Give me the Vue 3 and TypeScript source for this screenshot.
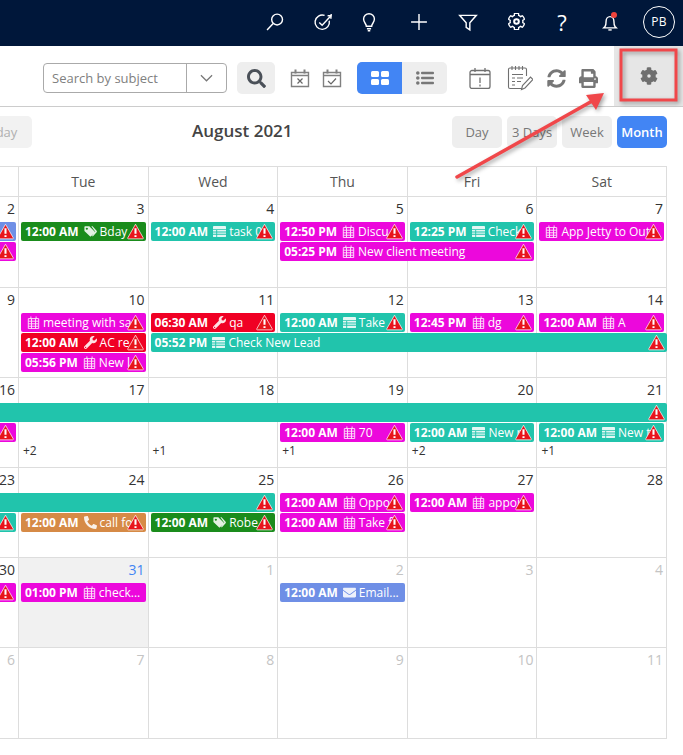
<template>
  <div class="page">
    <header class="topbar">
      <svg class="top-icon" viewBox="0 0 24 24"><circle cx="14.5" cy="9" r="6.5" /><path d="M9.8 13.8 2.5 21.5" /></svg>
      <svg class="top-icon" viewBox="0 0 24 24"><path d="M19.5 10.5a8.6 8.6 0 1 1-5.6-6.4" /><path d="m7.5 12.5 3.5 3.5 10-11" /><path d="M17.5 4.5h4.3v-2M21.5 4.5v3.5" /></svg>
      <svg class="top-icon bulb" viewBox="0 0 24 24"><path d="M8.8 17c0-3-3.3-4.300-3.300-8.500a6.500 6.500 0 0 1 13 0c0 4.200-3.300 5.500-3.300 8.500z" /><path d="M9.500 20h5M10.500 22.500h3" /></svg>
      <svg class="top-icon plus" viewBox="0 0 24 24"><path d="M12 2.500v19M2.500 12h19" /></svg>
      <svg class="top-icon funnel" viewBox="0 0 24 24"><path d="M2 4h20l-7.800 9v8.500l-4.400-3V13z" /></svg>
      <svg class="top-icon cog" viewBox="0 0 512 512"><path class="cog-line" :d="cogPath" /><circle class="cog-line" cx="256" cy="256" r="60" /></svg>
      <span class="help">?</span>
      <span class="bell">
        <svg class="top-icon" viewBox="0 0 24 24"><path d="M6 17.500c1.300-2 1.300-4 1.300-6.500 0-3 2-5.500 4.700-5.500s4.700 2.500 4.700 5.500c0 2.500 0 4.500 1.300 6.500l1.500 1.500H4.500z" /><path d="M10 21.500h4" /></svg>
        <i class="dot"></i>
      </span>
      <span class="avatar">PB</span>
    </header>

    <div class="toolbar">
      <div class="tools">
        <div class="search">
          <span class="placeholder">Search by subject</span>
          <span class="chev"><svg viewBox="0 0 14 8"><path d="m1 1 6 6 6-6" /></svg></span>
        </div>
        <button class="search-btn">
          <svg viewBox="0 0 512 512"><path :d="paths.search" /></svg>
        </button>
        <svg class="cal-ic first" viewBox="0 0 20 20">
          <path d="M1.500 4.500h17v14h-17zM1.500 7.500h17" /><path class="tick" d="M5.500 1.500v4M14.500 1.500v4" /><path class="mark" d="m7.500 10.500 5 5M12.500 10.500l-5 5" />
        </svg>
        <svg class="cal-ic" viewBox="0 0 20 20">
          <path d="M1.500 4.500h17v14h-17zM1.500 7.500h17" /><path class="tick" d="M5.500 1.500v4M14.500 1.500v4" /><path class="mark" d="m6 13 3 3 5-5.500" />
        </svg>
        <div class="toggle">
          <span class="toggle-on">
            <svg viewBox="0 0 18 14"><rect x="0" y="0" width="8" height="6" rx="1.500" /><rect x="10" y="0" width="8" height="6" rx="1.500" /><rect x="0" y="8" width="8" height="6" rx="1.500" /><rect x="10" y="8" width="8" height="6" rx="1.500" /></svg>
          </span>
          <span class="toggle-off">
            <svg viewBox="0 0 18 14"><circle cx="1.800" cy="2" r="1.800" /><circle cx="1.800" cy="7" r="1.800" /><circle cx="1.800" cy="12" r="1.800" /><rect x="5" y=".8" width="13" height="2.400" rx="1" /><rect x="5" y="5.800" width="13" height="2.400" rx="1" /><rect x="5" y="10.800" width="13" height="2.400" rx="1" /></svg>
          </span>
        </div>
        <svg class="tool-ic alarm" viewBox="0 0 22 22">
          <path d="M3 3.500h16a2 2 0 0 1 2 2v14a2 2 0 0 1-2 2H3a2 2 0 0 1-2-2v-14a2 2 0 0 1 2-2zM1 7.500h20M6 1v4M16 1v4" /><path d="M11 10.500v5.500M11 17.500v2" />
        </svg>
        <svg class="tool-ic notes" viewBox="0 0 26 26">
          <path d="M15 23.500H3a1.500 1.500 0 0 1-1.500-1.500V4.500A1.500 1.500 0 0 1 3 3h15a1.500 1.500 0 0 1 1.500 1.500V11" /><path d="M5 1v4M8.500 1v4M12 1v4M15.500 1v4M5 9.500h11M5 13h3M10 13h6M5 16.500h3M10 16.500h4M5 20h3" /><path d="m14.500 24.500 1-4 8-8.500 2.500 2.500-8 8.500z" />
        </svg>
        <svg class="fa-ic sync" viewBox="0 0 512 512"><path :d="paths.sync" /></svg>
        <svg class="fa-ic print" viewBox="0 0 512 512"><path :d="paths.print" /></svg>
      </div>
      <div class="gear-box">
        <svg viewBox="0 0 512 512"><path :d="cogPath" /><circle cx="256" cy="256" r="90" /><circle class="gear-hole" cx="256" cy="256" r="50" /></svg>
      </div>
    </div>

    <div class="calbar">
      <button class="vbtn today-btn">Today</button>
      <h2 class="title">August 2021</h2>
      <div class="views">
        <button v-for="v in views" :key="v" class="vbtn" :class="{ active: v === 'Month' }">{{ v }}</button>
      </div>
    </div>

    <div class="calendar">
      <div class="head">
        <div v-for="d in days" :key="d" class="head-cell">{{ d }}</div>
      </div>
      <div v-for="(week, w) in weeks" :key="w" class="week">
        <div
          v-for="(cell, c) in week.dates"
          :key="c"
          class="cell"
          :class="{ faded: cell.faded, today: cell.today }"
          :style="{ gridColumn: c + 1 }"
        >{{ cell.n }}</div>
        <div
          v-for="(ev, e) in week.events"
          :key="e"
          class="event"
          :class="{ 'open-l': ev.openL, 'open-r': ev.openR }"
          :style="{ gridColumn: `${ev.col} / span ${ev.span || 1}`, gridRow: ev.row + 1, background: colors[ev.color] }"
        >
          <div class="event-text">
            <b v-if="ev.time">{{ ev.time }}</b>
            <svg
              v-if="ev.icon"
              class="ev-icon"
              :class="{ lined: icons[ev.icon].lined }"
              :viewBox="icons[ev.icon].box"
            ><path :d="icons[ev.icon].d" /></svg>
            <span v-if="ev.title">{{ ev.title }}</span>
          </div>
          <svg v-if="ev.warn !== false" class="warn" viewBox="0 0 18 17">
            <path class="warn-bg" d="M9 .8 17.200 15.200a.7.7 0 0 1-.6 1.100H1.400a.7.7 0 0 1-.6-1.100z" />
            <path class="warn-ex" d="M9 5v6M9 12.600v1.600" />
          </svg>
        </div>
        <div
          v-for="m in week.more"
          :key="m.col"
          class="more"
          :style="{ gridColumn: m.col }"
        >{{ m.text }}</div>
      </div>
    </div>

    <svg class="note-layer" viewBox="0 0 683 755">
      <rect x="621" y="50" width="55" height="50" />
      <path d="M457 177 594 100" />
      <polygon points="604,93 586,95 596,110" />
    </svg>
  </div>
</template>

<script setup lang="ts">
type Color = 'magenta' | 'teal' | 'green' | 'red' | 'orange' | 'blue'
type IconName = 'tag' | 'list' | 'cal' | 'wrench' | 'phone' | 'mail'

interface CalEvent {
  col: number
  row: number
  color: Color
  span?: number
  time?: string
  icon?: IconName
  title?: string
  warn?: boolean
  openL?: boolean
  openR?: boolean
}

interface Week {
  dates: { n: number; faded?: boolean; today?: boolean }[]
  events: CalEvent[]
  more?: { col: number; text: string }[]
}

const views = ['Day', '3 Days', 'Week', 'Month']
const days = ['Mon', 'Tue', 'Wed', 'Thu', 'Fri', 'Sat']

const colors: Record<Color, string> = {
  magenta: '#ec08dc',
  teal: '#21c4ac',
  green: '#1a8c1c',
  red: '#f00024',
  orange: '#d68a46',
  blue: '#6f8fe6'
}

const cogPath =
  'M487.4 315.7l-42.6-24.6c4.3-23.2 4.3-47 0-70.2l42.6-24.6c4.9-2.8 7.1-8.6 5.5-14-11.1-35.6-30-67.8-54.7-94.6-3.8-4.1-10-5.1-14.8-2.3L380.8 110c-17.9-15.4-38.5-27.3-60.8-35.1V25.800c0-5.6-3.9-10.5-9.4-11.7-36.7-8.2-74.3-7.8-109.2 0-5.5 1.2-9.4 6.1-9.4 11.7V75c-22.2 7.9-42.8 19.8-60.8 35.1L88.7 85.500c-4.9-2.8-11-1.9-14.8 2.3-24.7 26.7-43.6 58.9-54.7 94.6-1.7 5.4.6 11.2 5.5 14L67.3 221c-4.3 23.2-4.3 47 0 70.2l-42.6 24.6c-4.9 2.8-7.1 8.6-5.5 14 11.1 35.6 30 67.8 54.7 94.6 3.8 4.1 10 5.1 14.8 2.3l42.6-24.6c17.9 15.4 38.5 27.3 60.8 35.1v49.2c0 5.6 3.9 10.5 9.4 11.7 36.7 8.2 74.3 7.8 109.2 0 5.5-1.2 9.4-6.1 9.4-11.7v-49.2c22.2-7.9 42.8-19.8 60.8-35.1l42.6 24.6c4.9 2.8 11 1.9 14.8-2.3 24.7-26.7 43.6-58.9 54.7-94.6 1.5-5.5-.7-11.3-5.6-14.1zM256 336c-44.1 0-80-35.9-80-80s35.9-80 80-80 80 35.9 80 80-35.9 80-80 80z'

const paths = {
  search:
    'M505 442.7L405.3 343c-4.5-4.5-10.6-7-17-7H372c27.6-35.3 44-79.7 44-128C416 93.1 322.9 0 208 0S0 93.1 0 208s93.1 208 208 208c48.3 0 92.7-16.4 128-44v16.3c0 6.4 2.5 12.5 7 17l99.7 99.7c9.4 9.4 24.6 9.4 33.9 0l28.3-28.3c9.4-9.4 9.4-24.6.1-34zM208 336c-70.7 0-128-57.2-128-128 0-70.7 57.2-128 128-128 70.7 0 128 57.2 128 128 0 70.7-57.2 128-128 128z',
  sync:
    'M370.72 133.28C339.458 104.008 298.888 87.962 255.848 88c-77.458.068-144.328 53.178-162.791 126.85-1.344 5.363-6.122 9.15-11.651 9.15H24.103c-7.498 0-13.194-6.807-11.807-14.176C33.933 94.924 134.813 8 256 8c66.448 0 126.791 26.136 171.315 68.685L463.03 40.97C478.149 25.851 504 36.559 504 57.941V192c0 13.255-10.745 24-24 24H345.941c-21.382 0-32.09-25.851-16.971-40.971l41.75-41.749zM32 296h134.059c21.382 0 32.09 25.851 16.971 40.971l-41.75 41.75c31.262 29.273 71.835 45.319 114.876 45.28 77.418-.07 144.315-53.144 162.787-126.849 1.344-5.363 6.122-9.15 11.651-9.15h57.304c7.498 0 13.194 6.807 11.807 14.176C478.067 417.076 377.187 504 256 504c-66.448 0-126.791-26.136-171.315-68.685L48.97 471.03C33.851 486.149 8 475.441 8 454.059V320c0-13.255 10.745-24 24-24z',
  print:
    'M448 192V77.25c0-8.49-3.37-16.62-9.37-22.63L393.37 9.370c-6-6-14.14-9.37-22.63-9.37H96C78.33 0 64 14.33 64 32v160c-35.35 0-64 28.65-64 64v112c0 8.84 7.16 16 16 16h48v96c0 17.67 14.33 32 32 32h320c17.67 0 32-14.33 32-32v-96h48c8.84 0 16-7.16 16-16V256c0-35.35-28.65-64-64-64zm-64 256H128v-96h256v96zm0-224H128V64h192v48c0 8.84 7.16 16 16 16h48v96zm48 72c-13.25 0-24-10.75-24-24 0-13.26 10.75-24 24-24s24 10.74 24 24c0 13.25-10.75 24-24 24z'
}

const icons: Record<IconName, { box: string; d: string; lined?: boolean }> = {
  tag: {
    box: '0 0 16 14',
    d: 'M.5 1.500A1 1 0 0 1 1.500.5h5l6.500 6.500a1 1 0 0 1 0 1.400l-4.300 4.300a1 1 0 0 1-1.400 0L.5 6.500zM3.500 2.300a1.200 1.200 0 1 0 .01 0zM9 .5h1.500l5 5.700a1.200 1.200 0 0 1 0 1.600l-4.700 5.200-.9-.9 4-4.800z'
  },
  list: {
    box: '0 0 14 12',
    d: 'M1 0h12a1 1 0 0 1 1 1v2.500H0V1a1 1 0 0 1 1-1zM0 4.500h3.500V6H0zM4.500 4.500H14V6H4.500zM0 7h3.500v1.500H0zM4.500 7H14v1.500H4.500zM0 9.500h3.500V12H1a1 1 0 0 1-1-1zM4.500 9.500H14V11a1 1 0 0 1-1 1H4.500z'
  },
  cal: {
    box: '0 0 14 15',
    lined: true,
    d: 'M1 3h12v11.500H1zM1 6h12M1 9h12M1 11.800h12M4.700 3v11.500M9.300 3v11.500M4 .5v3M10 .5v3'
  },
  wrench: {
    box: '0 0 512 512',
    d: 'M507.73 109.1c-2.24-9.03-13.54-12.09-20.12-5.51l-74.36 74.36-67.88-11.31-11.31-67.88 74.36-74.36c6.62-6.62 3.43-17.9-5.66-20.16-47.38-11.74-99.55.91-136.58 37.93-39.64 39.64-50.55 97.1-34.05 147.2L18.74 402.76c-24.99 24.99-24.99 65.51 0 90.5 24.99 24.99 65.51 24.99 90.5 0l213.21-213.21c50.12 16.71 107.47 5.68 147.37-34.22 37.07-37.07 49.7-89.32 37.91-136.73zM64 472c-13.25 0-24-10.75-24-24 0-13.26 10.75-24 24-24s24 10.74 24 24c0 13.25-10.75 24-24 24z'
  },
  phone: {
    box: '0 0 512 512',
    d: 'M18.600 24.600l104-24c11.300-2.600 22.900 3.300 27.500 13.900l48 112c4.200 9.800 1.400 21.300-6.900 28l-60.600 49.600c36 76.700 98.900 140.500 177.200 177.200l49.600-60.600c6.800-8.300 18.200-11.100 28-6.900l112 48c10.700 4.700 16.600 16.300 14 27.600l-24 104c-2.500 10.800-12.100 18.600-23.400 18.600C208 512 0 304.500 0 48c0-11.200 7.700-20.900 18.600-23.400z'
  },
  mail: {
    box: '0 0 512 512',
    d: 'M502.3 190.8c3.9-3.1 9.7-.2 9.7 4.7V400c0 26.5-21.5 48-48 48H48c-26.5 0-48-21.5-48-48V195.600c0-5 5.700-7.800 9.700-4.700 22.400 17.400 52.100 39.500 154.100 113.600 21.100 15.400 56.700 47.800 92.200 47.600 35.700.3 72-32.800 92.300-47.600 102-74.100 131.600-96.300 154-113.700zM256 320c23.200.4 56.600-29.200 73.400-41.400 132.700-96.300 142.800-104.700 173.400-128.700 5.800-4.500 9.200-11.500 9.200-18.900v-19c0-26.500-21.500-48-48-48H48C21.500 64 0 85.500 0 112v19c0 7.400 3.400 14.300 9.200 18.900 30.600 23.900 40.700 32.400 173.400 128.700 16.800 12.200 50.200 41.800 73.400 41.400z'
  }
}

const nums = (list: number[], faded: number[] = []) =>
  list.map((n, i) => ({ n, faded: faded.includes(i) }))

const weeks: Week[] = [
  {
    dates: nums([2, 3, 4, 5, 6, 7]),
    events: [
      { col: 1, row: 1, color: 'blue' },
      { col: 1, row: 2, color: 'magenta' },
      { col: 2, row: 1, color: 'green', time: '12:00 AM', icon: 'tag', title: 'Bday' },
      { col: 3, row: 1, color: 'teal', time: '12:00 AM', icon: 'list', title: 'task 0' },
      { col: 4, row: 1, color: 'magenta', time: '12:50 PM', icon: 'cal', title: 'Discu' },
      { col: 4, row: 2, span: 2, color: 'magenta', time: '05:25 PM', icon: 'cal', title: 'New client meeting' },
      { col: 5, row: 1, color: 'teal', time: '12:25 PM', icon: 'list', title: 'Check' },
      { col: 6, row: 1, color: 'magenta', icon: 'cal', title: 'App Jetty to Out' }
    ]
  },
  {
    dates: nums([9, 10, 11, 12, 13, 14]),
    events: [
      { col: 2, row: 1, color: 'magenta', icon: 'cal', title: 'meeting with sa' },
      { col: 2, row: 2, color: 'red', time: '12:00 AM', icon: 'wrench', title: 'AC re' },
      { col: 2, row: 3, color: 'magenta', time: '05:56 PM', icon: 'cal', title: 'New l' },
      { col: 3, row: 1, color: 'red', time: '06:30 AM', icon: 'wrench', title: 'qa' },
      { col: 3, row: 2, span: 4, color: 'teal', time: '05:52 PM', icon: 'list', title: 'Check New Lead', openR: true },
      { col: 4, row: 1, color: 'teal', time: '12:00 AM', icon: 'list', title: 'Take' },
      { col: 5, row: 1, color: 'magenta', time: '12:45 PM', icon: 'cal', title: 'dg' },
      { col: 6, row: 1, color: 'magenta', time: '12:00 AM', icon: 'cal', title: 'A' }
    ]
  },
  {
    dates: nums([16, 17, 18, 19, 20, 21]),
    events: [
      { col: 1, row: 1, span: 6, color: 'teal', openL: true, openR: true },
      { col: 1, row: 2, color: 'magenta' },
      { col: 4, row: 2, color: 'magenta', time: '12:00 AM', icon: 'cal', title: '70' },
      { col: 5, row: 2, color: 'teal', time: '12:00 AM', icon: 'list', title: 'New r' },
      { col: 6, row: 2, color: 'teal', time: '12:00 AM', icon: 'list', title: 'New t' }
    ],
    more: [
      { col: 2, text: '+2' },
      { col: 3, text: '+1' },
      { col: 4, text: '+1' },
      { col: 5, text: '+2' },
      { col: 6, text: '+1' }
    ]
  },
  {
    dates: nums([23, 24, 25, 26, 27, 28]),
    events: [
      { col: 1, row: 1, span: 3, color: 'teal', openL: true },
      { col: 1, row: 2, color: 'teal' },
      { col: 2, row: 2, color: 'orange', time: '12:00 AM', icon: 'phone', title: 'call fo' },
      { col: 3, row: 2, color: 'green', time: '12:00 AM', icon: 'tag', title: 'Robe' },
      { col: 4, row: 1, color: 'magenta', time: '12:00 AM', icon: 'cal', title: 'Oppo' },
      { col: 4, row: 2, color: 'magenta', time: '12:00 AM', icon: 'cal', title: 'Take f' },
      { col: 5, row: 1, color: 'magenta', time: '12:00 AM', icon: 'cal', title: 'appoi' }
    ]
  },
  {
    dates: [
      { n: 30 },
      { n: 31, today: true },
      { n: 1, faded: true },
      { n: 2, faded: true },
      { n: 3, faded: true },
      { n: 4, faded: true }
    ],
    events: [
      { col: 1, row: 1, color: 'magenta' },
      { col: 2, row: 1, color: 'magenta', time: '01:00 PM', icon: 'cal', title: 'check...', warn: false },
      { col: 4, row: 1, color: 'blue', time: '12:00 AM', icon: 'mail', title: 'Email...', warn: false }
    ]
  },
  {
    dates: nums([6, 7, 8, 9, 10, 11], [0, 1, 2, 3, 4, 5]),
    events: []
  }
]
</script>

<style>
html,
body {
  margin: 0;
  background: #fff;
  overflow: hidden;
}
</style>

<style scoped>
.page {
  position: relative;
  width: 683px;
  height: 755px;
  overflow: hidden;
  font-family: "Open Sans", "Liberation Sans", sans-serif;
  color: #333;
}

.topbar {
  display: flex;
  align-items: center;
  justify-content: flex-end;
  height: 46px;
  padding: 0 8px 3px 0;
  box-sizing: border-box;
  background: #00173a;
  color: #fff;
}

.top-icon {
  width: 20px;
  height: 20px;
  margin-right: 28px;
  fill: none;
  stroke: #fff;
  stroke-width: 1.7;
}

.top-icon.bulb {
  margin-right: 30px;
  margin-left: -2px;
}

.top-icon.plus {
  margin-right: 29px;
}

.top-icon.funnel {
  margin-right: 30px;
}

.top-icon.cog {
  width: 17px;
  height: 17px;
  margin-right: 30px;
}

.cog-line {
  stroke-width: 40;
}

.help {
  width: 14px;
  margin-right: 31px;
  font-size: 22px;
  line-height: 24px;
  text-align: center;
}

.bell {
  position: relative;
  display: flex;
}

.bell .top-icon {
  margin-right: 23px;
}

.dot {
  position: absolute;
  top: 0;
  left: 11px;
  width: 6px;
  height: 6px;
  border-radius: 50%;
  background: #f0443c;
}

.avatar {
  display: flex;
  align-items: center;
  justify-content: center;
  width: 30px;
  height: 30px;
  border: 1px solid #fff;
  border-radius: 50%;
  font-size: 12px;
  letter-spacing: 0.3px;
}

.toolbar {
  display: flex;
  height: 61px;
  box-sizing: border-box;
  border-bottom: 1px solid #ccc;
}

.tools {
  flex: 1;
  display: flex;
  align-items: center;
  padding: 4px 0 0 43px;
}

.search {
  display: flex;
  align-items: stretch;
  width: 184px;
  height: 30px;
  box-sizing: border-box;
  border: 1px solid #aaa;
  border-radius: 4px;
}

.placeholder {
  flex: 1;
  padding-left: 8px;
  font-size: 13px;
  line-height: 28px;
  color: #808080;
}

.chev {
  display: flex;
  align-items: center;
  justify-content: center;
  width: 39px;
  border-left: 1px solid #aaa;
}

.chev svg {
  width: 13px;
  height: 8px;
  fill: none;
  stroke: #777;
  stroke-width: 1.300;
}

.search-btn {
  display: flex;
  align-items: center;
  justify-content: center;
  width: 38px;
  height: 32px;
  margin-left: 10px;
  padding: 0;
  border: 0;
  border-radius: 5px;
  background: #eee;
}

.search-btn svg {
  width: 19px;
  height: 19px;
  fill: #4a5058;
}

.cal-ic {
  width: 20px;
  height: 20px;
  margin-left: 12px;
  fill: none;
  stroke: #808080;
  stroke-width: 1.400;
}

.cal-ic.first {
  margin-left: 15px;
}

.cal-ic .tick {
  stroke-width: 2;
}

.cal-ic .mark {
  stroke: #666;
  stroke-width: 1.200;
}

.toggle {
  display: flex;
  width: 90px;
  height: 32px;
  margin-left: 15px;
  overflow: hidden;
  border-radius: 5px;
  background: #eee;
}

.toggle span {
  display: flex;
  align-items: center;
  justify-content: center;
}

.toggle-on {
  width: 45px;
  background: #4285f4;
}

.toggle-on svg {
  width: 18px;
  height: 14px;
  fill: #fff;
}

.toggle-off {
  flex: 1;
}

.toggle-off svg {
  width: 18px;
  height: 14px;
  fill: #777;
}

.tool-ic {
  fill: none;
  stroke: #707070;
  stroke-width: 1.300;
}

.alarm {
  width: 22px;
  height: 22px;
  margin-left: 22px;
}

.notes {
  width: 26px;
  height: 26px;
  margin-left: 16px;
  stroke-width: 1.100;
}

.fa-ic {
  width: 19px;
  height: 19px;
  fill: #777;
}

.sync {
  margin-left: 14px;
}

.print {
  margin-left: 13px;
}

.gear-box {
  display: flex;
  align-items: center;
  justify-content: center;
  width: 69px;
  background: #e6e6e6;
}

.gear-box svg {
  width: 18px;
  height: 18px;
  fill: #6f6f6f;
}

.gear-box .gear-hole {
  fill: #e6e6e6;
}

.calbar {
  display: flex;
  align-items: center;
  height: 32px;
  margin: 9px 16px 18px 0;
}

.vbtn {
  width: 50px;
  height: 32px;
  padding: 0;
  border: 0;
  border-radius: 5px;
  background: #eee;
  font-family: inherit;
  font-size: 13px;
  color: #777;
}

.vbtn.active {
  background: #4285f4;
  font-weight: 600;
  color: #fff;
}

.today-btn {
  width: 66px;
  margin-left: -34px;
  background: #f2f2f2;
  color: #b0b0b0;
}

.title {
  margin: 0 0 3px 160px;
  font-size: 17px;
  font-weight: 600;
  color: #444;
}

.views {
  display: flex;
  gap: 5px;
  margin-left: auto;
}

.calendar {
  width: 777.6px;
  margin-left: -110.6px;
  border-top: 1px solid #ddd;
}

.head {
  display: grid;
  grid-template-columns: repeat(6, 1fr);
  height: 29px;
  border-bottom: 1px solid #ddd;
}

.head-cell {
  border-right: 1px solid #ddd;
  font-size: 14px;
  line-height: 30px;
  text-align: center;
  color: #555;
}

.week {
  display: grid;
  grid-template-columns: repeat(6, 1fr);
  grid-template-rows: 25px repeat(3, 20px) 1fr;
  height: 90px;
  box-sizing: border-box;
  border-bottom: 1px solid #ddd;
}

.head + .week,
.week:last-child {
  height: 91px;
}

.cell {
  grid-row: 1 / -1;
  padding-right: 3px;
  border-right: 1px solid #ddd;
  font-size: 14px;
  line-height: 24px;
  text-align: right;
  color: #333;
}

.cell.faded {
  color: #c4c4c4;
}

.cell.today {
  background: #f1f1f1;
  color: #4285f4;
}

.event {
  position: relative;
  z-index: 1;
  min-width: 0;
  height: 19px;
  margin: 0 3px 0 2px;
  border-radius: 2px;
  overflow: hidden;
  color: #fff;
}

.event.open-l {
  margin-left: 0;
  border-radius: 0 2px 2px 0;
}

.event.open-r {
  margin-right: 0;
}

.event-text {
  display: flex;
  align-items: center;
  height: 19px;
  padding-left: 4px;
  font-size: 12px;
  white-space: nowrap;
}

.event-text b {
  font-weight: 700;
}

.ev-icon {
  flex: none;
  width: 13px;
  height: 13px;
  margin: 0 3px 0 2px;
  fill: #fff;
  opacity: 0.88;
}

b + .ev-icon {
  margin-left: 5px;
}

.ev-icon.lined {
  fill: none;
  stroke: #fff;
  stroke-width: 1.100;
}

.warn {
  position: absolute;
  top: 1px;
  right: 2px;
  width: 17px;
  height: 17px;
}

.warn-bg {
  fill: #e8141c;
  stroke: #fff;
  stroke-opacity: 0.75;
  stroke-linejoin: round;
  stroke-width: 1;
}

.warn-ex {
  fill: none;
  stroke: #fff;
  stroke-width: 2.200;
}

.more {
  z-index: 1;
  grid-row: 4;
  padding: 1px 0 0 4px;
  font-size: 12px;
  line-height: 14px;
  color: #333;
}

.note-layer {
  position: absolute;
  top: 0;
  left: 0;
  width: 683px;
  height: 755px;
  pointer-events: none;
  filter: drop-shadow(2px 2px 2px rgba(0, 0, 0, 0.35));
}

.note-layer rect {
  fill: none;
  stroke: #f0474a;
  stroke-width: 3;
}

.note-layer path {
  fill: none;
  stroke: #f0474a;
  stroke-width: 3.500;
  stroke-linecap: round;
}

.note-layer polygon {
  fill: #f0474a;
}
</style>
